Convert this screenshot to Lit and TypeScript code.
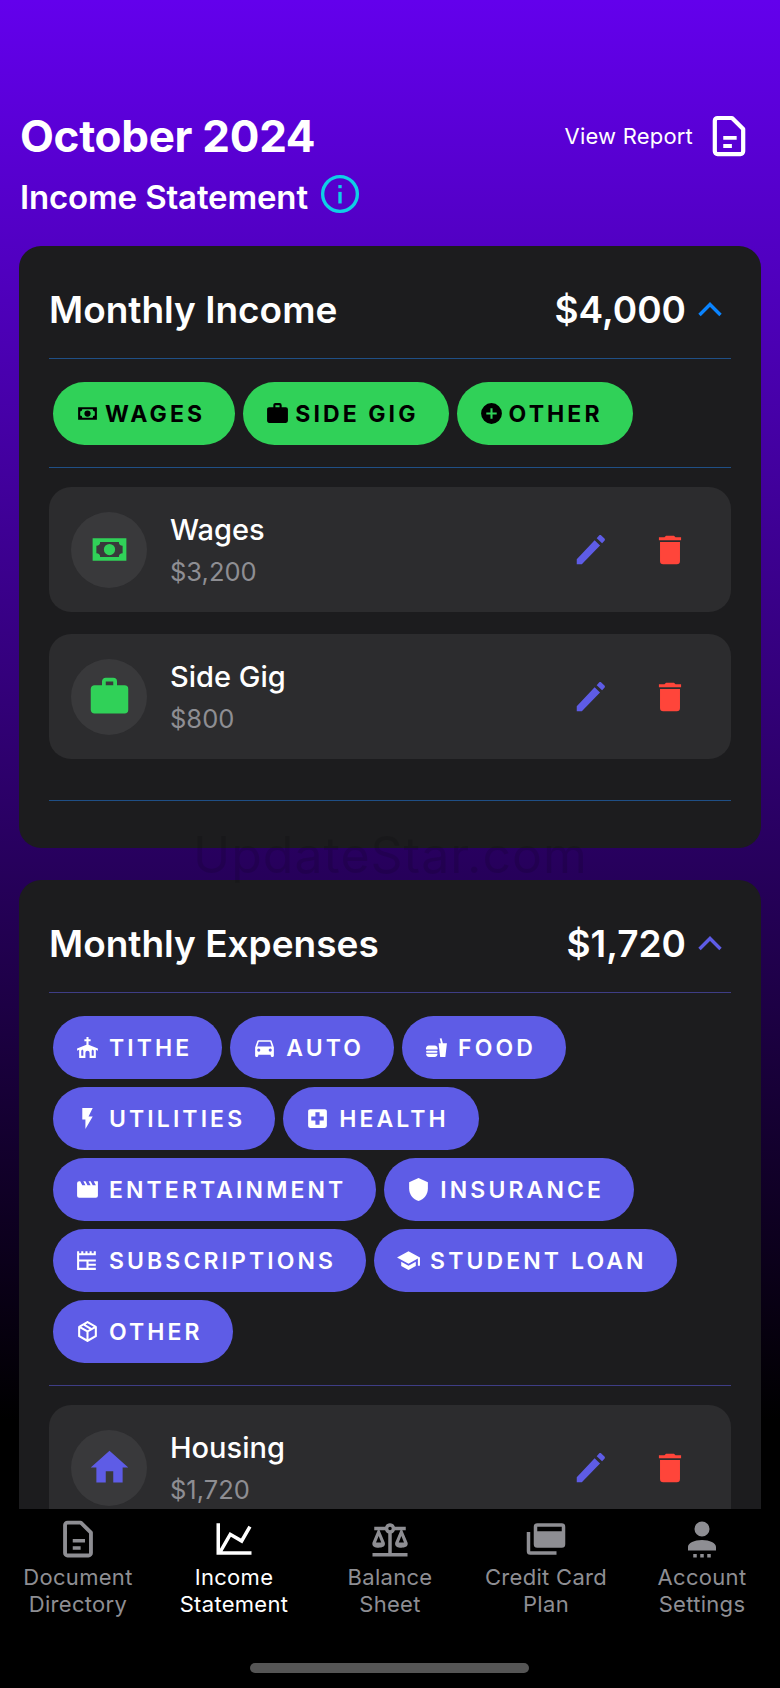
import { LitElement, html, css, svg } from "lit";
import { customElement } from "lit/decorators.js";

const icons: Record<string, unknown> = {
  cash: svg`<path fill-rule="evenodd" d="M3,6H21V18H3V6M12,9A3,3 0 0,1 15,12A3,3 0 0,1 12,15A3,3 0 0,1 9,12A3,3 0 0,1 12,9M7,8A2,2 0 0,1 5,10V14A2,2 0 0,1 7,16H17A2,2 0 0,1 19,14V10A2,2 0 0,1 17,8H7Z"/>`,
  briefcase: svg`<path d="M10,2H14A2,2 0 0,1 16,4V6H20A2,2 0 0,1 22,8V19A2,2 0 0,1 20,21H4C2.89,21 2,20.1 2,19V8C2,6.89 2.89,6 4,6H8V4C8,2.89 8.89,2 10,2M14,6V4H10V6H14Z"/>`,
  plus: svg`<path d="M17,13H13V17H11V13H7V11H11V7H13V11H17M12,2A10,10 0 0,0 2,12A10,10 0 0,0 12,22A10,10 0 0,0 22,12A10,10 0 0,0 12,2Z"/>`,
  church: svg`<path fill-rule="evenodd" d="M11,2H13V4H15V6H13V9.4L22,13V15L20,14.2V22H14V17A2,2 0 0,0 12,15A2,2 0 0,0 10,17V22H4V14.2L2,15V13L11,9.4V6H9V4H11V2M6,20H8V15L7,14L6,15V20M16,20H18V15L17,14L16,15V20Z"/>`,
  car: svg`<path d="M5,11L6.5,6.5H17.5L19,11M17.5,16A1.5,1.5 0 0,1 16,14.5A1.5,1.5 0 0,1 17.5,13A1.5,1.5 0 0,1 19,14.5A1.5,1.5 0 0,1 17.5,16M6.5,16A1.5,1.5 0 0,1 5,14.5A1.5,1.5 0 0,1 6.5,13A1.5,1.5 0 0,1 8,14.5A1.5,1.5 0 0,1 6.5,16M18.92,6C18.72,5.42 18.16,5 17.5,5H6.5C5.84,5 5.28,5.42 5.08,6L3,12V20A1,1 0 0,0 4,21H5A1,1 0 0,0 6,20V19H18V20A1,1 0 0,0 19,21H20A1,1 0 0,0 21,20V12L18.92,6Z"/>`,
  food: svg`<path d="M15.5,21L14,8H16.23L15.1,3.46L16.84,3L18.09,8H22L20.5,21H15.5M5,10H10A3,3 0 0,1 13,14H2A3,3 0 0,1 5,10M13,18A3,3 0 0,1 10,21H5A3,3 0 0,1 2,18H13M3,15H12A1,1 0 0,1 13,16A1,1 0 0,1 12,17H3A1,1 0 0,1 2,16A1,1 0 0,1 3,15Z"/>`,
  flash: svg`<path d="M7,2V13H10V22L17,10H13L17,2H7Z"/>`,
  health: svg`<path d="M19,3H5C3.89,3 3,3.89 3,5V19A2,2 0 0,0 5,21H19A2,2 0 0,0 21,19V5C21,3.89 20.1,3 19,3M18,14H14V18H10V14H6V10H10V6H14V10H18"/>`,
  movie: svg`<path d="M18,4L20,8H17L15,4H13L15,8H12L10,4H8L10,8H7L5,4H4A2,2 0 0,0 2,6V18A2,2 0 0,0 4,20H20A2,2 0 0,0 22,18V4H18Z"/>`,
  shield: svg`<path d="M12,1L3,5V11C3,16.55 6.84,21.74 12,23C17.16,21.74 21,16.55 21,11V5L12,1Z"/>`,
  news: svg`<path fill-rule="evenodd" d="M2 3h2v2h2V3h2v2h2V3h2v2h2V3h2v2h2V3h2v18H2V3ZM4 7v4h16V7H4Zm0 6v6h7v-6H4Zm9 0v2h7v-2h-7Zm0 4v2h7v-2h-7Z"/>`,
  school: svg`<path d="M12,3L1,9L12,15L21,10.09V17H23V9M5,13.18V17.18L12,21L19,17.18V13.18L12,17L5,13.18Z"/>`,
  box: svg`<path fill-rule="evenodd" d="M21,16.5C21,16.88 20.79,17.21 20.47,17.38L12.57,21.82C12.41,21.94 12.21,22 12,22C11.79,22 11.59,21.94 11.43,21.82L3.53,17.38C3.21,17.21 3,16.88 3,16.5V7.5C3,7.12 3.21,6.79 3.53,6.62L11.43,2.18C11.59,2.06 11.79,2 12,2C12.21,2 12.41,2.06 12.57,2.18L20.47,6.62C20.79,6.79 21,7.12 21,7.5V16.5M12,4.15L10.11,5.22L16,8.61L17.96,7.5L12,4.15M6.04,7.5L12,10.85L13.96,9.75L8.08,6.35L6.04,7.5M5,15.91L11,19.29V12.58L5,9.21V15.91M19,15.91V9.21L13,12.58V19.29L19,15.91Z"/>`,
  home: svg`<path d="M10,20V14H14V20H19V12H22L12,3L2,12H5V20H10Z"/>`,
  pencil: svg`<path d="M3 21v-3.2L14.3 5.9l3.4 3.2L6.2 21H3ZM15.6 4.5l1.5-1.6c.4-.4 1-.4 1.4 0l2 1.9c.4.4.4 1 0 1.4l-1.5 1.500-3.4-3.2Z"/>`,
  trash: svg`<path d="M9.500 3h5l1 1h3.500v1.800H5V4h3.500l1-1ZM5.700 7h12.600v12a2 2 0 0 1-2 2H7.700a2 2 0 0 1-2-2V7Z"/>`,
  doc: svg`<path fill="none" stroke="currentColor" stroke-width="2.2" stroke-linejoin="round" d="M6 2.6h7.6L19.4 8.4V20a1.4 1.4 0 0 1-1.4 1.4H6A1.4 1.4 0 0 1 4.6 20V4A1.4 1.4 0 0 1 6 2.6Z"/><path d="M9 12h7v2H9zM9 16.200h4.500v2H9z"/>`,
  chart: svg`<path d="M16,11.78L20.24,4.45L21.97,5.45L16.74,14.5L10.23,10.75L5.46,19H22V21H2V3H4V17.54L9.5,8L16,11.78Z"/>`,
  scale: svg`<path fill-rule="evenodd" d="M12,3C10.73,3 9.6,3.8 9.18,5H3V7H4.95L2,14C1.53,16 3,17 5.5,17C8,17 9.56,16 9,14L6.05,7H9.17C9.5,7.85 10.15,8.5 11,8.83V20H2V22H22V20H13V8.82C13.85,8.5 14.5,7.85 14.82,7H17.95L15,14C14.53,16 16,17 18.5,17C21,17 22.56,16 22,14L19.05,7H21V5H14.83C14.4,3.8 13.27,3 12,3M12,5A1,1 0 0,1 13,6A1,1 0 0,1 12,7A1,1 0 0,1 11,6A1,1 0 0,1 12,5M5.5,10.25L7,14H4L5.5,10.25M18.5,10.25L20,14H17L18.5,10.25Z"/>`,
  cards: svg`<path fill-rule="evenodd" d="M7 3h14a2 2 0 0 1 2 2v10a2 2 0 0 1-2 2H7a2 2 0 0 1-2-2V5a2 2 0 0 1 2-2Zm0 2v2.500h14V5H7Z"/><path d="M1 8h2v11h15v2H3a2 2 0 0 1-2-2V8Z"/>`,
  account: svg`<path d="M12,2A4.300,4.300 0 0,1 16.300,6.300A4.300,4.300 0 0,1 12,10.600A4.300,4.300 0 0,1 7.700,6.300A4.300,4.300 0 0,1 12,2M12,12.500C16.420,12.500 20,14.300 20,16.500V18.500H4V16.500C4,14.300 7.580,12.500 12,12.500M7,20.500H9V22.500H7V20.500M11,20.500H13V22.500H11V20.500M15,20.500H17V22.500H15V20.500Z"/>`,
};

const icon = (name: string, cls = "") =>
  html`<svg class=${cls} viewBox="0 0 24 24" fill="currentColor">${icons[name]}</svg>`;

const incomeChips = [
  ["cash", "WAGES"],
  ["briefcase", "SIDE GIG"],
  ["plus", "OTHER"],
];
const expenseChips = [
  ["church", "TITHE"],
  ["car", "AUTO"],
  ["food", "FOOD"],
  ["flash", "UTILITIES"],
  ["health", "HEALTH"],
  ["movie", "ENTERTAINMENT"],
  ["shield", "INSURANCE"],
  ["news", "SUBSCRIPTIONS"],
  ["school", "STUDENT LOAN"],
  ["box", "OTHER"],
];
const tabs = [
  ["doc", "Document", "Directory"],
  ["chart", "Income", "Statement"],
  ["scale", "Balance", "Sheet"],
  ["cards", "Credit Card", "Plan"],
  ["account", "Account", "Settings"],
];

@customElement("app-root")
export class AppRoot extends LitElement {
  static styles = css`
    :host {
      display: block;
      font-family: Inter, "Noto Sans", sans-serif;
      color: #fff;
    }
    svg {
      display: block;
      flex: none;
    }
    .page {
      position: relative;
      height: 1688px;
      display: flex;
      flex-direction: column;
      overflow: hidden;
      background: linear-gradient(#6300ec 0, #000 1420px);
    }
    .scroll {
      flex: 1;
      min-height: 0;
      overflow: hidden;
      padding: 0 19px;
    }
    .top {
      height: 246px;
      padding-top: 106px;
      box-sizing: border-box;
    }
    .top-row {
      display: flex;
      align-items: center;
      justify-content: space-between;
      height: 60px;
      padding-left: 1px;
    }
    .month {
      font-size: 44px;
      font-weight: 700;
      letter-spacing: -0.3px;
    }
    .report {
      display: flex;
      align-items: center;
      gap: 18px;
      padding-right: 17px;
      font-size: 22px;
      letter-spacing: 0.2px;
    }
    .report svg {
      width: 46px;
      height: 46px;
      margin: 0 -8px 0 -5px;
    }
    .sub {
      display: flex;
      align-items: center;
      gap: 12px;
      height: 44px;
      margin-top: 9px;
      padding-left: 1px;
      font-size: 33px;
      font-weight: 600;
      letter-spacing: -0.15px;
    }
    .info {
      width: 40px;
      height: 40px;
      margin-top: -6px;
      color: #0fcfe6;
    }
    .card {
      background: #1c1c1e;
      border-radius: 22px;
      padding: 0 30px 47px;
      margin-bottom: 32px;
    }
    .card-head {
      display: flex;
      align-items: center;
      justify-content: space-between;
      box-sizing: border-box;
      height: 112px;
      padding-top: 14px;
      font-size: 37px;
      font-weight: 600;
    }
    .total {
      display: flex;
      align-items: center;
      gap: 10px;
    }
    .chev {
      width: 28px;
      height: 28px;
      margin-right: 7px;
    }
    .income .chev {
      color: #0a84ff;
    }
    .expense .chev {
      color: #5e5ce6;
    }
    .line {
      height: 1px;
    }
    .income .line {
      background: #1f4f86;
    }
    .expense .line {
      background: #3e3d86;
    }
    .chips {
      display: flex;
      flex-wrap: wrap;
      gap: 8px 8px;
      padding: 23px 4px 22px;
    }
    .chip {
      display: flex;
      align-items: center;
      gap: 9px;
      height: 63px;
      padding: 0 30px 0 22px;
      border-radius: 32px;
      font-size: 23px;
      font-weight: 600;
      letter-spacing: 3.1px;
    }
    .chip svg {
      width: 25px;
      height: 25px;
    }
    .income .chip {
      background: #30d158;
      color: #000;
      gap: 5px;
      padding-right: 30px;
      font-weight: 700;
    }
    .expense .chip {
      background: #5e5ce6;
    }
    .rows {
      display: flex;
      flex-direction: column;
      gap: 22px;
      padding-top: 19px;
    }
    .row {
      display: flex;
      align-items: center;
      height: 125px;
      padding: 0 42px 0 22px;
      border-radius: 22px;
      background: #2c2c2e;
    }
    .badge {
      display: flex;
      align-items: center;
      justify-content: center;
      width: 76px;
      height: 76px;
      margin-right: 23px;
      border-radius: 50%;
      background: #39393b;
    }
    .badge svg {
      width: 45px;
      height: 45px;
    }
    .income .badge {
      color: #30d158;
    }
    .expense .badge {
      color: #5e5ce6;
    }
    .names {
      flex: 1;
      padding-top: 1px;
    }
    .name {
      font-size: 29px;
      font-weight: 500;
      line-height: 40px;
    }
    .amt {
      margin-top: 3px;
      font-size: 25.500px;
      line-height: 38px;
      color: #8e8e93;
    }
    .edit {
      width: 38px;
      height: 38px;
      margin-right: 41px;
      color: #5e5ce6;
    }
    .trash {
      width: 38px;
      height: 38px;
      color: #ff453a;
    }
    .foot {
      margin-top: 41px;
    }
    .tabs {
      flex: none;
      position: relative;
      display: flex;
      height: 179px;
      background: #000;
    }
    .tab {
      flex: 1;
      display: flex;
      flex-direction: column;
      align-items: center;
      padding-top: 9px;
      font-size: 22px;
      line-height: 27px;
      letter-spacing: 0.3px;
      text-align: center;
      color: #8e8e93;
    }
    .tab.on {
      color: #fff;
    }
    .tab svg {
      width: 42px;
      height: 42px;
      margin-bottom: 4px;
    }
    .home-bar {
      position: absolute;
      left: 250px;
      bottom: 15px;
      width: 279px;
      height: 10px;
      border-radius: 5px;
      background: #555;
    }
    .mark {
      position: absolute;
      left: 193px;
      top: 825px;
      font-size: 50px;
      letter-spacing: 1px;
      color: rgba(0, 0, 0, 0.12);
      pointer-events: none;
    }
  `;

  private chips(list: string[][]) {
    return html`<div class="chips">
      ${list.map(([i, t]) => html`<div class="chip">${icon(i)}<span>${t}</span></div>`)}
    </div>`;
  }

  private row(i: string, name: string, amt: string) {
    return html`<div class="row">
      <div class="badge">${icon(i)}</div>
      <div class="names">
        <div class="name">${name}</div>
        <div class="amt">${amt}</div>
      </div>
      ${icon("pencil", "edit")} ${icon("trash", "trash")}
    </div>`;
  }

  private head(title: string, total: string) {
    return html`<div class="card-head">
      <span>${title}</span>
      <div class="total">
        <span>${total}</span>
        <svg class="chev" viewBox="0 0 28 28" fill="none" stroke="currentColor" stroke-width="3.4">
          <path d="M3.500 20 14 9.500 24.500 20" />
        </svg>
      </div>
    </div>`;
  }

  render() {
    return html`<div class="page">
      <div class="scroll">
        <div class="top">
          <div class="top-row">
            <span class="month">October 2024</span>
            <div class="report"><span>View Report</span>${icon("doc")}</div>
          </div>
          <div class="sub">
            <span>Income Statement</span>
            <svg class="info" viewBox="0 0 38 38" fill="none" stroke="currentColor">
              <circle cx="19" cy="19" r="16.500" stroke-width="3.2" />
              <path d="M19 17v11" stroke-width="3.200" />
              <path d="M19 10.500v3" stroke-width="3.200" />
            </svg>
          </div>
        </div>

        <section class="card income">
          ${this.head("Monthly Income", "$4,000")}
          <div class="line"></div>
          ${this.chips(incomeChips)}
          <div class="line"></div>
          <div class="rows">
            ${this.row("cash", "Wages", "$3,200")} ${this.row("briefcase", "Side Gig", "$800")}
          </div>
          <div class="foot line"></div>
        </section>

        <section class="card expense">
          ${this.head("Monthly Expenses", "$1,720")}
          <div class="line"></div>
          ${this.chips(expenseChips)}
          <div class="line"></div>
          <div class="rows">${this.row("home", "Housing", "$1,720")}</div>
        </section>
      </div>

      <nav class="tabs">
        ${tabs.map(
          ([i, a, b], n) => html`<div class="tab ${n === 1 ? "on" : ""}">
            ${icon(i)}<span>${a}<br />${b}</span>
          </div>`
        )}
        <div class="home-bar"></div>
      </nav>
      <div class="mark">UpdateStar.com</div>
    </div>`;
  }
}
